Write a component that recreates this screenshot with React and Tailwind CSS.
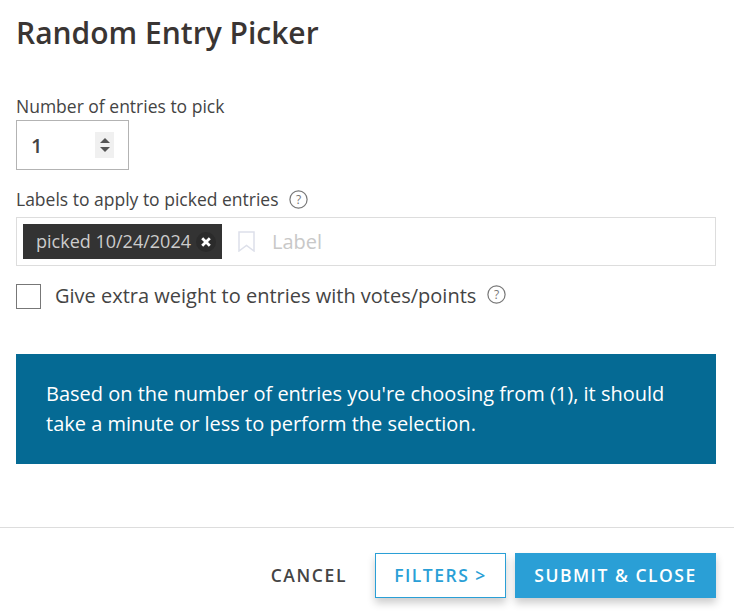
import React from "react";

function HelpIcon() {
  return (
    <svg width="19" height="19" viewBox="0 0 19 19" fill="none" className="shrink-0">
      <circle cx="9.5" cy="9.5" r="8.6" stroke="#777" strokeWidth="1.2" />
      <text x="9.5" y="14" textAnchor="middle" fontSize="12" fill="#777" fontFamily="Open Sans, sans-serif">
        ?
      </text>
    </svg>
  );
}

export default function App() {
  return (
    <div className="w-[734px] h-[616px] bg-white flex flex-col font-['Open_Sans',sans-serif] text-[#444] overflow-hidden">
      <div className="flex-1 pl-4 pr-[18px]">
        <h1 className="text-[30px] leading-[38px] font-semibold text-[#3a3533] pt-[14px]">Random Entry Picker</h1>

        <label className="block mt-[43px] text-[17.5px] leading-[22px]">Number of entries to pick</label>
        <div className="mt-[3px] w-[113px] h-[50px] border border-[#b3b3b3] flex items-center justify-between pl-[14px] pr-[14px]">
          <span className="text-[20px] font-semibold text-[#444] pt-[2px]">1</span>
          <div className="w-[19px] h-[26px] bg-[#f0f0f0] flex flex-col items-center justify-center gap-[4px]">
            <span className="w-0 h-0 border-x-[5px] border-x-transparent border-b-[5px] border-b-[#555]" />
            <span className="w-0 h-0 border-x-[5px] border-x-transparent border-t-[5px] border-t-[#555]" />
          </div>
        </div>

        <div className="mt-[18px] flex items-center gap-[10px] h-[22px] mb-[7px]">
          <span className="text-[17.5px] leading-[22px]">Labels to apply to picked entries</span>
          <HelpIcon />
        </div>
        <div className="h-[49px] border border-[#ddd] flex items-center pl-[6px]">
          <div className="h-[35px] w-[199px] bg-[#333] flex items-center pl-[13px]">
            <span className="text-[18px] text-[#ccc]">picked 10/24/2024</span>
            <span className="ml-[5px] w-5 h-5 rounded-full bg-[#2b2b2b] flex items-center justify-center">
              <svg width="10" height="10" viewBox="0 0 10 10">
                <path d="M1.2 1.2 L8.8 8.8 M8.8 1.2 L1.2 8.8" stroke="#fff" strokeWidth="2.8" />
              </svg>
            </span>
          </div>
          <svg width="17" height="21" viewBox="0 0 17 21" fill="none" className="ml-[16px] shrink-0">
            <path d="M1 1 H16 V20 L8.5 14.5 L1 20 Z" stroke="#dde0ea" strokeWidth="1.5" />
          </svg>
          <span className="ml-[17px] text-[20px] font-medium text-[#c8c8c8]">Label</span>
        </div>

        <div className="mt-[18px] flex items-center h-[25px]">
          <div className="w-[25px] h-[25px] border border-[#777] bg-white" />
          <span className="ml-[14px] text-[20px] leading-[25px] text-[#444] -mt-[3px]">Give extra weight to entries with votes/points</span>
          <span className="ml-[11px] -mt-[4px]"><HelpIcon /></span>
        </div>

        <div className="mt-[45px] h-[110px] bg-[#056a94] text-white text-[20px] leading-[30px] px-[30px] py-[25px]">
          Based on the number of entries you're choosing from (1), it should take a minute or less to perform the selection.
        </div>
      </div>

      <div className="h-[89px] border-t border-[#ddd] flex items-start justify-end px-[18px] pt-[25px]">
        <button className="h-[45px] mr-[28px] text-[17.5px] font-semibold tracking-[1.6px] text-[#444]">CANCEL</button>
        <button className="h-[45px] w-[131px] mr-[9px] border border-[#2a9fd6] bg-white text-[#2a9fd6] text-[17.5px] font-semibold tracking-[1.5px] shadow-[0_5px_8px_rgba(0,0,0,0.2)]">FILTERS &gt;</button>
        <button className="h-[45px] w-[201px] bg-[#2a9fd6] text-white text-[17.5px] font-semibold tracking-[1.5px] shadow-[0_5px_8px_rgba(0,0,0,0.2)]">SUBMIT &amp; CLOSE</button>
      </div>
    </div>
  );
}
